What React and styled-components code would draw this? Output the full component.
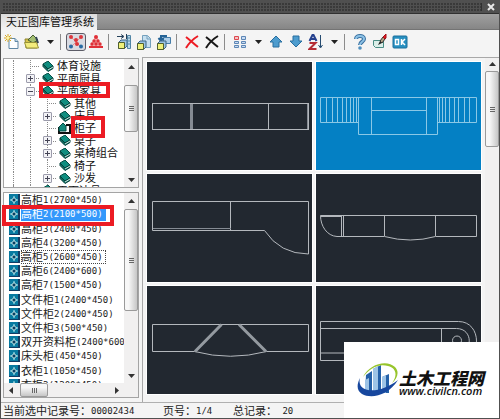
import React from "react";
import styled, { createGlobalStyle } from "styled-components";

const Global = createGlobalStyle`
  * { box-sizing: border-box; }
  body { margin: 0; background: #f4f4f4; }
  button { font: inherit; color: inherit; border: 0; padding: 0; margin: 0; background: none; }
  ul { list-style: none; margin: 0; padding: 0; }
  svg { display: block; }
`;

const Window = styled.div`
  position: relative;
  display: flex;
  flex-direction: column;
  min-height: 100vh;
  border: solid #505050;
  border-width: 0 1px 2px 1px;
  background: #f4f4f4;
  color: #222;
  font: 11px/14px "Liberation Sans", "Noto Sans CJK SC", sans-serif;
  overflow: hidden;
`;

const TitleBar = styled.header`
  display: flex;
  align-items: center;
  height: 14px;
  padding: 0 2px;
  border-bottom: 1px solid #303030;
  background: #505050;
`;

const Grip = styled.div`
  flex: 1;
  height: 8px;
  margin-right: 3px;
  border-right: 1px solid #303030;
  background: radial-gradient(circle at 1px 1px, #3a3a3a 1px, transparent 1px) 0 0 / 3px 3px;
`;

const CloseButton = styled.button`
  width: 12px;
  height: 12px;
`;

const TabStrip = styled.div`
  display: flex;
  height: 16px;
  border-bottom: 1px solid #747474;
  background: linear-gradient(#a0a0a0, #868686);
`;

const Tab = styled.h1`
  margin: 0;
  padding: 0 3px 0 5px;
  height: 16px;
  background: linear-gradient(#dcdcdc, #f4f4f4);
  font-size: 11px;
  line-height: 16px;
  font-weight: 400;
  color: #111;
`;

const Toolbar = styled.div`
  display: flex;
  align-items: center;
  height: 27px;
  padding: 0 1px;
  padding-bottom: 3px;
`;

const Tool = styled.button`
  display: grid;
  place-items: center;
  width: 20px;
  height: 18px;
  border: 1px solid ${(p) => (p.$on ? "#5c5c66" : "transparent")};
  border-radius: 3px;
  background: ${(p) => (p.$on ? "#d9dbe2" : "none")};
`;

const DropTool = styled(Tool)`
  width: 16px;
`;

const Divider = styled.span`
  width: 1px;
  height: 16px;
  margin: 0 5px 0 2px;
  background: #8c8c8c;
`;

const Body = styled.main`
  display: flex;
  flex: 1;
`;

const Sidebar = styled.aside`
  display: flex;
  flex-direction: column;
  gap: 4px;
  width: 138px;
  padding: 1px 0 4px 2px;
`;

const Panel = styled.section`
  display: flex;
  flex-direction: column;
  flex: ${(p) => (p.$grow ? "1 1 0" : "none")};
  height: ${(p) => (p.$grow ? "auto" : "130px")};
  min-height: 0;
  border: 1px solid #a4a4a4;
  background: #fff;
  overflow: hidden;
`;

const PanelMain = styled.div`
  display: flex;
  flex: 1;
  min-height: 0;
`;

const Rows = styled.ul`
  display: grid;
  align-content: start;
  flex: 1;
  min-width: 0;
  overflow: hidden;
`;

const TreeRows = styled(Rows)`
  grid-template-rows: repeat(11, 1fr);
  height: 138px;
  padding-top: 1px;
`;

const ListRows = styled(Rows)`
  grid-template-rows: repeat(14, 1fr);
  height: 199px;
`;

const TreeRow = styled.li`
  display: flex;
  align-items: stretch;
  min-height: 0;
  min-width: 0;
  padding-left: 1px;
  white-space: nowrap;
  overflow: visible;
`;

const Guide = styled.span`
  display: grid;
  grid-template-columns: 8px 9px;
  width: 17px;
  &::after {
    content: "";
    grid-column: 2;
    border-left: 1px dotted #8a8a8a;
  }
`;

const Branch = styled.span`
  display: grid;
  align-items: center;
  width: 17px;
  background:
    repeating-linear-gradient(90deg, #8a8a8a 0 1px, transparent 1px 2px) 8px 6px / 9px 1px no-repeat,
    repeating-linear-gradient(#8a8a8a 0 1px, transparent 1px 2px) 8px 0 / 1px 100% no-repeat;
`;

const Expander = styled.button`
  display: grid;
  place-items: center;
  justify-self: center;
  width: 9px;
  height: 9px;
  border: 1px solid #9c9cac;
  border-radius: 1px;
  background: #f3f3f6;
`;

const NodeButton = styled.button`
  display: flex;
  align-items: center;
  gap: 1px;
  line-height: 12px;
  color: #111;
`;

const IconSlot = styled.span`
  display: grid;
  place-items: center;
  width: 17px;
`;

const ListRow = styled.li`
  display: flex;
  min-height: 0;
  min-width: 0;
  padding-left: 4px;
`;

const ListButton = styled.button`
  display: flex;
  align-items: center;
  white-space: nowrap;
  color: #222;
`;

const RecordName = styled.span`
  display: flex;
  align-items: center;
  height: 14px;
  padding-right: 3px;
  outline: ${(p) => (p.$focus ? "1px dotted #444" : "none")};
  outline-offset: -1px;
  background: ${(p) => (p.$selected ? "#3398fb" : "transparent")};
  color: ${(p) => (p.$selected ? "#fff" : "#222")};
`;

const Digits = styled.span`
  font: 9px/12px "DejaVu Sans Mono", monospace;
`;

const ScrollTrack = styled.div`
  display: flex;
  flex-direction: ${(p) => (p.$across ? "row" : "column")};
  align-items: stretch;
  justify-content: space-between;
  flex: none;
  ${(p) => (p.$across ? "height: 14px; padding-right: 14px;" : "width: 14px;")}
  background: #f1f0f0;
`;

const ScrollArrow = styled.button`
  display: grid;
  place-items: center;
  flex: none;
  ${(p) => (p.$across ? "width: 15px;" : `height: ${p.$size || 16}px;`)}
`;

const ThumbRoom = styled.div`
  display: flex;
  flex-direction: ${(p) => (p.$across ? "row" : "column")};
  flex: 1;
  ${(p) => (p.$across ? "padding-left: 1px;" : `padding-top: ${p.$start || 0}px;`)}
`;

const Thumb = styled.div`
  display: grid;
  place-items: center;
  ${(p) => (p.$across ? `width: ${p.$length}px;` : `height: ${p.$length}px;`)}
  border: 1px solid #9a9a9a;
  border-radius: 2px;
  background: linear-gradient(${(p) => (p.$across ? "180deg" : "90deg")}, #f7f7f7 30%, #c6c6c6);
`;

const Gallery = styled.section`
  display: flex;
  flex: 1;
  min-width: 0;
  margin-left: 3px;
  border: solid #a8a8a8;
  border-width: 1px 0 0 1px;
`;

const Thumbs = styled.div`
  display: grid;
  grid-template-columns: 1fr 1fr;
  gap: 4px;
  flex: 1;
  align-content: start;
  padding: 4px 4px 8px 4px;
`;

const Thumbnail = styled.button`
  display: block;
  min-width: 0;
  background: ${(p) => (p.$selected ? "#0480c4" : "#222830")};
  outline: 1px solid #fff;
  svg { width: 100%; height: auto; }
`;

const StatusBar = styled.footer`
  display: flex;
  align-items: center;
  height: 16px;
  padding-left: 2px;
  border-top: 1px solid #b0b0b0;
`;

const StatusItem = styled.span`
  display: flex;
  align-items: center;
  width: ${(p) => p.$width}px;
  white-space: pre;
`;

const Highlight = styled.span`
  position: absolute;
  border: 4px solid #ec1c24;
  pointer-events: none;
  left: ${(p) => p.$x}px;
  top: ${(p) => p.$y}px;
  width: ${(p) => p.$w}px;
  height: ${(p) => p.$h}px;
`;

const Watermark = styled.div`
  position: absolute;
  right: -1px;
  bottom: -2px;
  display: flex;
  align-items: center;
  width: 156px;
  height: 78px;
  padding: 0 0 2px 13px;
  background: #fff;
`;

const BrandText = styled.div`
  display: flex;
  flex-direction: column;
  padding-top: 6px;
  font-style: italic;
  white-space: nowrap;
  color: #111;
`;

const BrandName = styled.strong`
  font: italic 900 17px/15px "Noto Sans CJK SC", sans-serif;
`;

const BrandUrl = styled.span`
  font: italic 600 11px/12px "Open Sans", "Noto Sans", sans-serif;
`;

const Arrow = ({ dir }) => {
  const d = { up: "M0 5 3.5 1 7 5z", down: "M0 2 3.5 6 7 2z", left: "M5 0 1 3.5 5 7z", right: "M2 0 6 3.5 2 7z" }[dir];
  return <svg width="7" height="7" viewBox="0 0 7 7"><path d={d} fill="#333" /></svg>;
};

const Ridges = ({ across }) => (
  <svg width="7" height="7" viewBox="0 0 7 7">
    <path d={across ? "M1.5 1v5M3.5 1v5M5.5 1v5" : "M1 1.5h5M1 3.5h5M1 5.5h5"} stroke="#666" />
  </svg>
);

function ScrollBar({ across, start, length, size }) {
  return (
    <ScrollTrack $across={across}>
      <ScrollArrow $across={across} $size={size} aria-label="scroll back"><Arrow dir={across ? "left" : "up"} /></ScrollArrow>
      <ThumbRoom $across={across} $start={start}>
        <Thumb $across={across} $length={length}><Ridges across={across} /></Thumb>
      </ThumbRoom>
      <ScrollArrow $across={across} $size={size} aria-label="scroll forward"><Arrow dir={across ? "right" : "down"} /></ScrollArrow>
    </ScrollTrack>
  );
}

const Pic = ({ children }) => <svg width="16" height="16" viewBox="0 0 16 16">{children}</svg>;

const Caret = () => <svg width="7" height="5" viewBox="0 0 7 5"><path d="M0 0h7L3.5 4z" fill="#222" /></svg>;

const Cube = ({ x, y }) => (
  <g transform={`translate(${x} ${y})`}>
    <path d="M.5 3.5 3 1h6v6L6.5 9.5h-6z" fill="#9cc4e4" stroke="#3c6484" />
    <path d="M.5 3.5h6v6h-6z" fill="#eef07a" stroke="#52602c" />
  </g>
);

const icons = {
  add: (
    <Pic>
      <path d="M5 4.5h6l3 3v7H5z" fill="#fdfeff" stroke="#5f87a5" /><path d="M11 4.5v3h3" fill="#bed8ea" stroke="#5f87a5" />
      <path d="M4 0v8M0 4h8M1 1l6 6M7 1 1 7" stroke="#d8a824" /><circle cx="4" cy="4" r="1.5" fill="#fff6a0" />
    </Pic>
  ),
  open: (
    <Pic>
      <path d="M1 5h4l1 2h7v7H2z" fill="#d6c44a" stroke="#8f842c" /><path d="M4 6 9 1l5 5-5 3z" fill="#a4bf72" stroke="#475c32" />
      <path d="m12 3 2 6" stroke="#345" strokeWidth="2" /><path d="M.5 8.5h12l2 5.5H2.5z" fill="#f3ec7c" stroke="#98933a" />
    </Pic>
  ),
  nodes: (
    <Pic>
      <path d="M3 3 8 8l5-5M3 13l5-5 5 5" stroke="#e69292" fill="none" />
      <g fill="#dc363b"><circle cx="3" cy="3" r="2" /><circle cx="8" cy="6" r="2" /><circle cx="13" cy="3" r="2" /><circle cx="9" cy="10" r="2" /></g>
      <g fill="#286ba3"><circle cx="3" cy="12.5" r="2" /><circle cx="13" cy="12.5" r="2" /></g>
    </Pic>
  ),
  pyramid: (
    <Pic>
      <path d="M8 1 15 14H1z" fill="#f2b2b2" />
      <g fill="#df3038"><circle cx="8" cy="3" r="2" /><circle cx="6" cy="7" r="1.7" /><circle cx="10" cy="7" r="1.7" /><circle cx="4" cy="10" r="1.7" /><circle cx="8" cy="10" r="1.7" /><circle cx="12" cy="10" r="1.7" /><path d="M1 12h14v2H1z" /></g>
    </Pic>
  ),
  insert: <Pic><path d="M1 2.5h6M5 .5l3 2-3 2M10.5 0v5" stroke="#24405a" fill="none" /><Cube x={2} y={5} /><path d="M11.5 1.5h3v13h-3z" fill="#b8d7e9" stroke="#5185a5" /><path d="M12 4h2M12 7h2M12 10h2" stroke="#5185a5" /></Pic>,
  copy: <Pic><path d="M6.5 1.5h5l3 3v9h-8z" fill="#c6e0f0" stroke="#74a0bd" /><path d="M11 2v3h3" fill="none" stroke="#74a0bd" /><Cube x={1} y={6} /></Pic>,
  replace: <Pic><path d="M7.5 3.5h7v6h-7z" fill="#aecfe9" stroke="#467da8" /><path d="M11 2H5v4M2.5 4 5 7l2.5-3" stroke="#256396" fill="none" strokeWidth="2" /><Cube x={1} y={6} /></Pic>,
  redX: <Pic><path d="M2 3c4 3 8 7 12 10M14 2C9 5 5 9 2 14" stroke="#ed1c24" strokeWidth="2" fill="none" /></Pic>,
  blackX: <Pic><path d="M2 3c4 3 8 7 12 10M14 2C9 5 5 9 2 14" stroke="#181818" strokeWidth="2" fill="none" /></Pic>,
  grid: (
    <Pic>
      <path d="M2.5 2.5h4v3h-4z" fill="#f6c3c3" stroke="#dc4850" />
      <path d="M9.5 2.5h4v3h-4zM2.5 7.5h4v2h-4zM9.5 7.5h4v2h-4zM2.5 11.5h4v2h-4zM9.5 11.5h4v2h-4z" fill="#c9dcf3" stroke="#5d86b5" />
    </Pic>
  ),
  up: <Pic><path d="m8 2 6 6h-3v5H5V8H2z" fill="#4d9cce" stroke="#286e9f" /></Pic>,
  down: <Pic><path d="m8 13 6-6h-3V2H5v5H2z" fill="#4d9cce" stroke="#286e9f" /></Pic>,
  sort: (
    <Pic>
      <path d="M1.5 7 5 0l3.5 7M3 5h4" stroke="#26418e" strokeWidth="2" fill="none" />
      <path d="M1.5 9h6l-6 6h7" stroke="#b52c34" strokeWidth="2" fill="none" />
      <path d="M12.5 1v12M10.5 11l2 3 2-3" stroke="#264b70" fill="none" />
    </Pic>
  ),
  help: <Pic><path d="M4 5c0-4 8-4 8 0 0 3-4 2.5-4 6" stroke="#386f9f" strokeWidth="4" fill="none" /><path d="M4 5c0-4 8-4 8 0 0 3-4 2.5-4 6" stroke="#8dc2e6" strokeWidth="2" fill="none" /><circle cx="8" cy="14" r="1.8" fill="#4f8fbe" /></Pic>,
  brush: <Pic><path d="M1.5 6.5h10v7h-8l-2-2z" fill="#dcefe9" stroke="#4a8c84" /><path d="m6 11 2-4 2 2z" fill="#222" /><path d="m8 7 3-4 2 2-3 4z" fill="#b5a083" stroke="#333" /><path d="m11 3 3-3v4l-1 1z" fill="#e11b22" stroke="#a51018" /></Pic>,
  ok: (
    <Pic>
      <rect x="1" y="2" width="14" height="12" rx="1" fill="#278fc0" stroke="#1b6f9b" />
      <path d="M3.5 5.5h3v5h-3zM9.5 5v6M13 5l-3 3 3 3" stroke="#fff" strokeWidth="1.5" fill="none" />
    </Pic>
  ),
};

const tools = [
  ["add", "新建"], ["open", "打开"], "caret", "sep",
  ["nodes", "合并检索", true], ["pyramid", "分类"], "sep",
  ["insert", "新图入库"], ["copy", "重制"], ["replace", "替换"], "sep",
  ["redX", "删除类别"], ["blackX", "删除"], "sep",
  ["grid", "布局"], "caret", ["up", "上移"], ["down", "下移"], ["sort", "排序"], "caret", "sep",
  ["help", "帮助"], ["brush", "编辑"], ["ok", "确定"],
];

const Book = () => (
  <svg width="12" height="11" viewBox="0 0 12 11">
    <path d="M1 3 6 0l5 5-5 3z" fill="#108e80" stroke="#064e46" />
    <path d="M1 3v2.5l5 5 5-3V5L6 8z" fill="#0d6d62" stroke="#05403a" /><path d="m6 9 5-3" stroke="#cde8e2" />
  </svg>
);

const OpenBook = () => (
  <svg width="13" height="11" viewBox="0 0 13 11">
    <path d="M1 4v6h11V2H8" fill="#fff" stroke="#111" strokeWidth="2" />
    <path d="m1 4 4-4 3 3v5H1z" fill="#12897c" stroke="#064e46" />
  </svg>
);

const tree = [
  [1, "体育设施"], [1, "平面厨具", "+"], [1, "平面家具", "-"], [2, "其他"], [2, "床具", "+"], [2, "柜子", "", true],
  [2, "桌子", "+"], [2, "桌椅组合", "+"], [2, "椅子"], [2, "沙发", "+"], [1, "平面洁具"],
];

const records = [
  ["高柜", "1(2700*450)"], ["高柜", "2(2100*500)"], ["高柜", "3(2400*450)"], ["高柜", "4(3200*450)"],
  ["高柜", "5(2600*450)"], ["高柜", "6(2400*600)"], ["高柜", "7(1500*450)"], ["文件柜", "1(2400*450)"],
  ["文件柜", "2(2400*450)"], ["文件柜", "3(500*450)"], ["双开资料柜", "(2400*600)"], ["床头柜", "(450*450)"],
  ["衣柜", "1(1050*450)"], ["衣柜", "2(1200*450)"],
];

const BlockIcon = () => (
  <svg width="13" height="12" viewBox="0 0 13 12">
    <path d="M1 0h9l2 2v10H1z" fill="#087aa0" /><path d="M10 0h2v12H1v-1h9z" fill="#123c64" />
    <path d="M6 2v8M2 6h8" stroke="#a9e9ee" /><path d="m6 3.5 2.5 2.5L6 8.500 3.5 6z" fill="#083e61" stroke="#dbfaf6" />
  </svg>
);

const drawings = [
  <g key="d"><path d="M5 41.500h156M5 67.500h156M121.500 42v26M161.500 41v27M5.500 41v27" /><path d="M44.500 42v25" strokeWidth="3" stroke="#858b93" /><path d="M160.500 42v25" stroke="#858b93" /></g>,
  <g key="d" stroke="#8bc8e6"><path d="M4.500 35.500h156v25h-39v12h-79v-12h-38zM42.500 35v26M121.500 35v26M55.500 36v37M110.500 36v37M56 48.500h54M10.500 36v25M16.500 36v25M21.500 36v25M26.500 36v25M30.500 36v25M34.500 36v25M37.500 36v25M40.500 36v25M123.500 36v25M126.500 36v25M129.500 36v25M133.500 36v25M138.500 36v25M142.500 36v25M148.500 36v25M153.500 36v25" /></g>,
  <g key="d"><path d="M117.500 56.500H5.500v-29h156v52.500Q133 80 117.500 56.500M83.500 28v28" /><path d="M6 54.500h78" stroke="#858b93" /></g>,
  <g key="d"><path d="M4.500 41.500h156v21h-41q-25 7-51 0H21C11 62 4.500 52 4.500 41.500M25.500 42v20M27.500 42v20M68.500 42v20M119.500 42v20M5 42.500h20" /></g>,
  <g key="d"><path d="M47.500 65.500h-42v-27h156v27h-42M47.500 65.500q36 9.500 72 0" /><path d="m48 65.500 26.500-27M119 65.500 92 38.500" strokeWidth="3" stroke="#949aa0" /></g>,
  <g key="d"><path d="M142.500 35.500H4.500v39h138c24 0 24-39 0-39M4.500 42.500h136c17 0 17 24.500 0 24.500H4.500M125.500 43v24" /><circle cx="141" cy="54.500" r="4.500" /></g>,
];

export default function App() {
  return (
    <>
      <Global />
      <Window>
        <TitleBar>
          <Grip />
          <CloseButton aria-label="关闭"><svg width="12" height="12" viewBox="0 0 12 12"><path d="m3 3 6 6M9 3 3 9" stroke="#e8e8e8" strokeWidth="2" /></svg></CloseButton>
        </TitleBar>
        <TabStrip><Tab>天正图库管理系统</Tab></TabStrip>
        <Toolbar role="toolbar">
          {tools.map((t, i) => {
            if (t === "sep") return <Divider key={i} />;
            if (t === "caret") return <DropTool key={i} aria-label="更多"><Caret /></DropTool>;
            return <Tool key={i} aria-label={t[1]} $on={t[2]}>{icons[t[0]]}</Tool>;
          })}
        </Toolbar>
        <Body>
          <Sidebar>
            <Panel>
              <PanelMain>
                <TreeRows>
                  {tree.map(([level, name, mark, open]) => (
                    <TreeRow key={name}>
                      <Guide />
                      {level === 2 && <Guide />}
                      <Branch>
                        {mark && (
                          <Expander aria-label={name}>
                            <svg width="7" height="7" viewBox="0 0 7 7"><path d={mark === "+" ? "M1 3.500h5M3.500 1v5" : "M1 3.500h5"} stroke="#445" /></svg>
                          </Expander>
                        )}
                      </Branch>
                      <NodeButton><IconSlot>{open ? <OpenBook /> : <Book />}</IconSlot>{name}</NodeButton>
                    </TreeRow>
                  ))}
                </TreeRows>
                <ScrollBar start={10} length={47} />
              </PanelMain>
            </Panel>
            <Panel $grow>
              <PanelMain>
                <ListRows>
                  {records.map(([name, size], i) => (
                    <ListRow key={name + size}>
                      <ListButton>
                        <BlockIcon />
                        <RecordName $selected={i === 1} $focus={i === 4}>{name}<Digits>{size}</Digits></RecordName>
                      </ListButton>
                    </ListRow>
                  ))}
                </ListRows>
                <ScrollBar length={102} />
              </PanelMain>
              <ScrollBar across length={28} />
            </Panel>
          </Sidebar>
          <Gallery>
            <Thumbs>
              {drawings.map((d, i) => (
                <Thumbnail key={i} $selected={i === 1} aria-label={records[i].join("")}>
                  <svg viewBox="0 0 165 108" fill="none" stroke="#b4b8bd">{d}</svg>
                </Thumbnail>
              ))}
            </Thumbs>
            <ScrollBar length={76} size={13} />
          </Gallery>
        </Body>
        <StatusBar>
          <StatusItem $width={160}>当前选中记录号：<Digits>00002434</Digits></StatusItem>
          <StatusItem $width={70}>页号：<Digits>1/4</Digits></StatusItem>
          <StatusItem $width={80}>总记录：<Digits> 20</Digits></StatusItem>
        </StatusBar>
        <Highlight $x={38} $y={82} $w={71} $h={16} />
        <Highlight $x={70} $y={116} $w={34} $h={22} />
        <Highlight $x={1} $y={205} $w={112} $h={21} />
        <Watermark>
          <svg width="42" height="36" viewBox="0 0 42 36">
            <path d="M8 31h7V9l-6 4zM16 31h8V3l-8 4zM25 31h7V12l-7 3z" fill="#2561a8" />
            <path d="M16 31V7l5-3v27zM8 31V18l4-2v15zM25 31V15l4-2v18z" fill="#9ec4e6" />
            <path d="M6 15C12 2 30-3 38 5c5 5 2 12-3 16 6-8 4-15-4-17C21 1 12 7 6 15z" fill="#98c52c" />
            <path d="M3 16c-4 15 19 17 38 2C31 34 14 37 5 32c-6-4-5-10-2-16z" fill="#17479e" />
          </svg>
          <BrandText>
            <BrandName>土木工程网</BrandName>
            <BrandUrl>www.civilcn.com</BrandUrl>
          </BrandText>
        </Watermark>
      </Window>
    </>
  );
}
